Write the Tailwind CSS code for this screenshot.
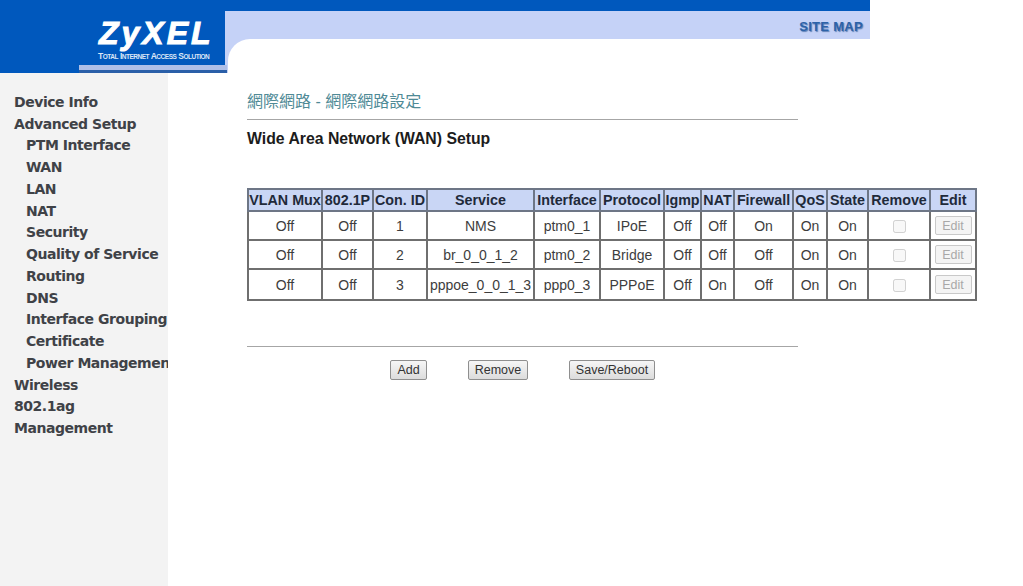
<!DOCTYPE html>
<html>
<head>
<meta charset="utf-8">
<script src="https://cdn.jsdelivr.net/npm/@tailwindcss/browser@4"></script>
</head>
<body class="bg-white w-[1023px] h-[586px] overflow-hidden font-['Liberation_Sans',sans-serif]">
<header class="flex h-[73px] w-[870px]">
  <div class="w-[225px] bg-[#0058bd] flex flex-col items-start pl-[79px]">
    <div class="w-[148px] h-[73px] flex flex-col relative z-10">
      <div class="ml-[20px] mt-[17px] h-[33px] text-[32px] leading-[33px] font-bold italic text-white tracking-[3px] [-webkit-text-stroke:1px_white] whitespace-nowrap">ZyXEL</div>
      <div class="ml-[19px] mt-[1px] h-[10px] text-[8.5px] leading-[10px] font-bold text-[#dbe6f7] tracking-[-0.48px] whitespace-nowrap">T<span class="text-[6.5px]">OTAL</span> I<span class="text-[6.5px]">NTERNET</span> A<span class="text-[6.5px]">CCESS</span> S<span class="text-[6.5px]">OLUTION</span></div>
      <div class="mt-[4px] h-[5px] bg-[#aebfe8]"></div>
      <div class="h-[3px] bg-[#2a5fa8]"></div>
    </div>
  </div>
  <div class="flex-1 flex flex-col">
    <div class="h-[11px] bg-[#0058bd]"></div>
    <div class="flex-1 bg-[#c5d2f7] flex flex-col">
      <div class="h-[28px] pt-[4px] flex items-center justify-end pr-[7px] text-[13px] font-bold tracking-[0.3px] text-[#2c62a8] [text-shadow:1px_1px_1px_#5d7fb5]">SITE MAP</div>
      <div class="flex-1 bg-white ml-[3px] rounded-tl-[22px]"></div>
    </div>
  </div>
</header>
<div class="flex h-[513px]">
  <nav class="w-[168px] bg-[#f3f3f3] overflow-hidden whitespace-nowrap pt-[19px] pl-[14px] font-['DejaVu_Sans',sans-serif] font-bold text-[14px] tracking-[-0.45px] leading-[21.73px] text-[#3f4247] shrink-0">
    <div>Device Info</div>
    <div>Advanced Setup</div>
    <div class="pl-[12px]">
      <div>PTM Interface</div>
      <div>WAN</div>
      <div>LAN</div>
      <div>NAT</div>
      <div>Security</div>
      <div>Quality of Service</div>
      <div>Routing</div>
      <div>DNS</div>
      <div>Interface Grouping</div>
      <div>Certificate</div>
      <div>Power Management</div>
    </div>
    <div>Wireless</div>
    <div>802.1ag</div>
    <div>Management</div>
  </nav>
  <main class="pl-[79px] flex-1">
    <div class="w-[551px]">
      <div class="mt-[18px] h-[22px] text-[16px] leading-[22px] text-[#4f8a96] font-['Liberation_Sans','Noto_Sans_CJK_TC',sans-serif] font-normal">網際網路 - 網際網路設定</div>
      <div class="mt-[6px] h-px bg-[#a6a6a6]"></div>
      <h1 class="mt-[9px] h-[20px] text-[15.8px] leading-[20px] font-bold text-[#1c1c1c] whitespace-nowrap">Wide Area Network (WAN) Setup</h1>
    </div>
    <table class="mt-[39px] table-fixed border-collapse w-[728px] text-[14px] leading-[18px] text-[#3d3d3d] text-center">
      <colgroup>
        <col class="w-[74px]"><col class="w-[51px]"><col class="w-[54px]"><col class="w-[107px]"><col class="w-[66px]"><col class="w-[64px]"><col class="w-[37px]"><col class="w-[33px]"><col class="w-[59px]"><col class="w-[34px]"><col class="w-[41px]"><col class="w-[62px]"><col class="w-[46px]">
      </colgroup>
      <thead>
        <tr class="h-[22px] bg-[#c9d6f5] text-[14.3px] text-[#1f2a3a] [&>th]:border-2 [&>th]:border-[#6d7686] [&>th]:p-0 [&>th]:whitespace-nowrap [&>th]:font-bold">
          <th>VLAN Mux</th><th>802.1P</th><th>Con. ID</th><th>Service</th><th>Interface</th><th>Protocol</th><th>Igmp</th><th>NAT</th><th>Firewall</th><th>QoS</th><th>State</th><th>Remove</th><th>Edit</th>
        </tr>
      </thead>
      <tbody class="[&_td]:border-2 [&_td]:border-[#6f6f6f] [&_td]:p-0 [&_td]:whitespace-nowrap">
        <tr class="h-[29px]">
          <td>Off</td><td>Off</td><td>1</td><td>NMS</td><td>ptm0_1</td><td>IPoE</td><td>Off</td><td>Off</td><td>On</td><td>On</td><td>On</td>
          <td><input type="checkbox" disabled class="align-middle w-[13px] h-[13px]"></td>
          <td><button disabled class="w-[37px] h-[19px] align-middle border border-[#c9c9c9] rounded-[2px] bg-[#f4f4f4] text-[12.5px] text-[#a8a8a8]">Edit</button></td>
        </tr>
        <tr class="h-[29px]">
          <td>Off</td><td>Off</td><td>2</td><td>br_0_0_1_2</td><td>ptm0_2</td><td>Bridge</td><td>Off</td><td>Off</td><td>Off</td><td>On</td><td>On</td>
          <td><input type="checkbox" disabled class="align-middle w-[13px] h-[13px]"></td>
          <td><button disabled class="w-[37px] h-[19px] align-middle border border-[#c9c9c9] rounded-[2px] bg-[#f4f4f4] text-[12.5px] text-[#a8a8a8]">Edit</button></td>
        </tr>
        <tr class="h-[31px]">
          <td>Off</td><td>Off</td><td>3</td><td>pppoe_0_0_1_3</td><td>ppp0_3</td><td>PPPoE</td><td>Off</td><td>On</td><td>Off</td><td>On</td><td>On</td>
          <td><input type="checkbox" disabled class="align-middle w-[13px] h-[13px]"></td>
          <td><button disabled class="w-[37px] h-[19px] align-middle border border-[#c9c9c9] rounded-[2px] bg-[#f4f4f4] text-[12.5px] text-[#a8a8a8]">Edit</button></td>
        </tr>
      </tbody>
    </table>
    <div class="w-[551px] mt-[45px] h-px bg-[#a6a6a6]"></div>
    <div class="mt-[13px] flex pl-[143px] text-[12.5px] text-[#333]">
      <button class="w-[37px] h-[20px] border border-[#8f8f8f] rounded-[2px] bg-gradient-to-b from-[#f6f6f6] to-[#dcdcdc]">Add</button>
      <button class="ml-[41px] w-[60px] h-[20px] border border-[#8f8f8f] rounded-[2px] bg-gradient-to-b from-[#f6f6f6] to-[#dcdcdc]">Remove</button>
      <button class="ml-[41px] w-[86px] h-[20px] border border-[#8f8f8f] rounded-[2px] bg-gradient-to-b from-[#f6f6f6] to-[#dcdcdc]">Save/Reboot</button>
    </div>
  </main>
</div>
</body>
</html>
